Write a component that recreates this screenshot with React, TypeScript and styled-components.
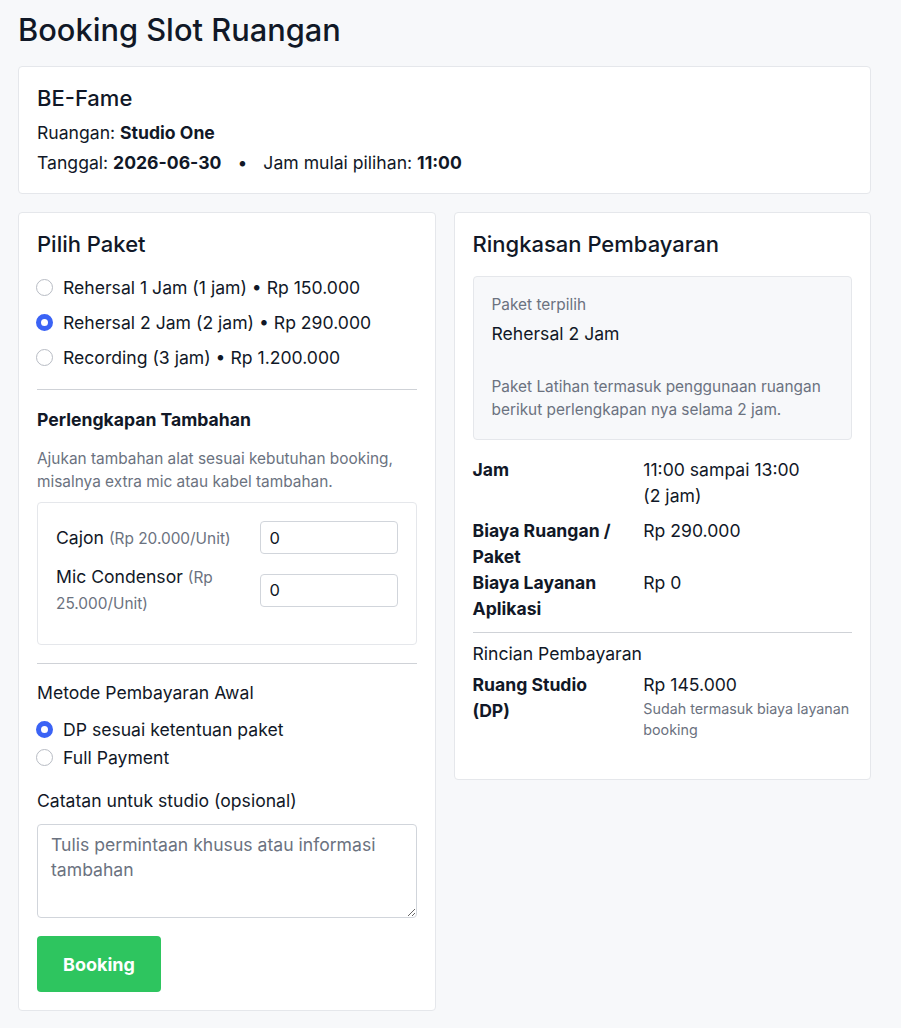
import React, { useState } from 'react';
import styled, { createGlobalStyle } from 'styled-components';

const GlobalStyle = createGlobalStyle`
  * { box-sizing: border-box; }
  body {
    margin: 0;
    background: #f7f8fa;
    font-family: Inter, "Noto Sans", sans-serif;
    color: #111827;
  }
`;

type Paket = { id: string; name: string; hours: number; price: number; desc: string };

const PAKETS: Paket[] = [
  { id: 'r1', name: 'Rehersal 1 Jam', hours: 1, price: 150000, desc: 'Paket Latihan termasuk penggunaan ruangan berikut perlengkapan nya selama 1 jam.' },
  { id: 'r2', name: 'Rehersal 2 Jam', hours: 2, price: 290000, desc: 'Paket Latihan termasuk penggunaan ruangan berikut perlengkapan nya selama 2 jam.' },
  { id: 'rec', name: 'Recording', hours: 3, price: 1200000, desc: 'Paket Recording termasuk penggunaan ruangan berikut perlengkapan nya selama 3 jam.' },
];

const EQUIPMENT = [
  { id: 'cajon', name: 'Cajon', price: 20000 },
  { id: 'mic', name: 'Mic Condensor', price: 25000 },
];

const rp = (n: number) => 'Rp ' + n.toLocaleString('id-ID');

const App: React.FC = () => {
  const [paketId, setPaketId] = useState('r2');
  const [method, setMethod] = useState<'dp' | 'full'>('dp');
  const [qty, setQty] = useState<Record<string, string>>({ cajon: '0', mic: '0' });
  const [note, setNote] = useState('');

  const paket = PAKETS.find((p) => p.id === paketId)!;
  const startHour = 11;
  const endHour = startHour + paket.hours;
  const pad = (h: number) => `${String(h).padStart(2, '0')}:00`;

  return (
    <Page>
      <GlobalStyle />
      <Title>Booking Slot Ruangan</Title>

      <Card>
        <CardTitle $mb={10}>BE-Fame</CardTitle>
        <InfoLine>
          Ruangan: <b>Studio One</b>
        </InfoLine>
        <InfoLine>
          Tanggal: <b>2026-06-30</b>
          <Dot>•</Dot>
          Jam mulai pilihan: <b>11:00</b>
        </InfoLine>
      </Card>

      <Columns>
        <Card>
          <CardTitle $mb={13}>Pilih Paket</CardTitle>
          {PAKETS.map((p) => (
            <RadioRow key={p.id} $h={35}>
              <Radio
                type="radio"
                name="paket"
                checked={paketId === p.id}
                onChange={() => setPaketId(p.id)}
              />
              {p.name} ({p.hours} jam) • {rp(p.price)}
            </RadioRow>
          ))}

          <Divider $mt={14} />

          <SubHeading>Perlengkapan Tambahan</SubHeading>
          <Muted>
            Ajukan tambahan alat sesuai kebutuhan booking, misalnya extra mic atau kabel
            tambahan.
          </Muted>
          <EquipBox>
            {EQUIPMENT.map((e) => (
              <EquipRow key={e.id}>
                <EquipLabel>
                  {e.name} <small>({rp(e.price)}/Unit)</small>
                </EquipLabel>
                <QtyInput
                  type="number"
                  min={0}
                  value={qty[e.id]}
                  onChange={(ev) => setQty({ ...qty, [e.id]: ev.target.value })}
                />
              </EquipRow>
            ))}
          </EquipBox>

          <Divider $mt={18} $mb={17} />

          <FieldLabel>Metode Pembayaran Awal</FieldLabel>
          <RadioRow $h={28}>
            <Radio type="radio" name="method" checked={method === 'dp'} onChange={() => setMethod('dp')} />
            DP sesuai ketentuan paket
          </RadioRow>
          <RadioRow $h={28}>
            <Radio type="radio" name="method" checked={method === 'full'} onChange={() => setMethod('full')} />
            Full Payment
          </RadioRow>

          <FieldLabel $mt={18} $mb={11}>Catatan untuk studio (opsional)</FieldLabel>
          <NoteArea
            placeholder="Tulis permintaan khusus atau informasi tambahan"
            value={note}
            onChange={(e) => setNote(e.target.value)}
          />

          <BookingButton type="button">Booking</BookingButton>
        </Card>

        <Card $self="start">
          <CardTitle $mb={19}>Ringkasan Pembayaran</CardTitle>
          <PaketBox>
            <SmallMuted>Paket terpilih</SmallMuted>
            <PaketName>{paket.name}</PaketName>
            <Muted $mb={0}>{paket.desc}</Muted>
          </PaketBox>

          <SummaryRow $mb={9}>
            <dt>Jam</dt>
            <dd>
              {pad(startHour)} sampai {pad(endHour)} <Keep>({paket.hours} jam)</Keep>
            </dd>
          </SummaryRow>
          <SummaryRow>
            <dt>Biaya Ruangan / Paket</dt>
            <dd>{rp(paket.price)}</dd>
          </SummaryRow>
          <SummaryRow>
            <dt>Biaya Layanan Aplikasi</dt>
            <dd>Rp 0</dd>
          </SummaryRow>

          <Divider $mt={10} $mb={9} />

          <FieldLabel $mb={6}>Rincian Pembayaran</FieldLabel>
          <SummaryRow $mb={21}>
            <dt>Ruang Studio ({method === 'dp' ? 'DP' : 'Full'})</dt>
            <dd>
              {rp(method === 'dp' ? paket.price / 2 : paket.price)}
              <Note>Sudah termasuk biaya layanan booking</Note>
            </dd>
          </SummaryRow>
        </Card>
      </Columns>
    </Page>
  );
};

const Page = styled.div`
  padding: 12px 30px 18px 18px;
`;

const Title = styled.h1`
  margin: 0 0 18px;
  font-size: 30.8px;
  line-height: 36px;
  font-weight: 500;
`;

const Card = styled.section<{ $self?: string }>`
  background: #fff;
  border: 1px solid #e5e7eb;
  border-radius: 4px;
  padding: 18px;
  align-self: ${(p) => p.$self || 'stretch'};
`;

const Columns = styled.div`
  display: grid;
  grid-template-columns: 1fr 1fr;
  gap: 18px;
  margin-top: 18px;
`;

const CardTitle = styled.h2<{ $mb?: number }>`
  margin: 0 0 ${(p) => p.$mb ?? 12}px;
  font-size: 22px;
  line-height: 26px;
  font-weight: 500;
`;

const InfoLine = styled.p`
  margin: 0 0 6px;
  font-size: 17.6px;
  line-height: 24px;
  &:last-child { margin-bottom: 0; }
  b { font-weight: 700; }
`;

const Dot = styled.span`
  margin: 0 16px;
`;

const RadioRow = styled.label<{ $h: number }>`
  display: flex;
  align-items: center;
  gap: 10px;
  height: ${(p) => p.$h}px;
  font-size: 17.6px;
  cursor: pointer;
`;

const Radio = styled.input`
  appearance: none;
  margin: 0 0 0 -1px;
  width: 17px;
  height: 17px;
  border-radius: 50%;
  border: 1px solid #b8bcc4;
  background: #fff;
  flex-shrink: 0;
  &:checked {
    border: 5px solid #3b63f5;
  }
`;

const Divider = styled.hr<{ $mt?: number; $mb?: number }>`
  border: 0;
  border-top: 1px solid #cfd2d7;
  margin: ${(p) => p.$mt ?? 18}px 0 ${(p) => p.$mb ?? 18}px;
`;

const SubHeading = styled.h3`
  margin: 0 0 15px;
  font-size: 17.6px;
  line-height: 24px;
  font-weight: 700;
`;

const Muted = styled.p<{ $mb?: number }>`
  margin: 0 0 ${(p) => p.$mb ?? 9}px;
  font-size: 15.4px;
  line-height: 23px;
  color: #6b7280;
`;

const EquipBox = styled.div`
  border: 1px solid #e5e7eb;
  border-radius: 4px;
  padding: 18px;
`;

const EquipRow = styled.div`
  display: grid;
  grid-template-columns: 1fr 138px;
  gap: 14px;
  align-items: center;
  margin-bottom: 10px;
`;

const EquipLabel = styled.span`
  font-size: 17.6px;
  line-height: 25px;
  small {
    font-size: 15.4px;
    color: #6b7280;
  }
`;

const QtyInput = styled.input`
  height: 33px;
  width: 100%;
  border: 1px solid #d1d5db;
  border-radius: 4px;
  padding: 0 9px;
  font: inherit;
  font-size: 16.5px;
  color: #111827;
  -moz-appearance: textfield;
  &::-webkit-inner-spin-button,
  &::-webkit-outer-spin-button { -webkit-appearance: none; margin: 0; }
`;

const FieldLabel = styled.div<{ $mt?: number; $mb?: number }>`
  margin: ${(p) => p.$mt ?? 0}px 0 ${(p) => p.$mb ?? 10}px;
  font-size: 17.6px;
  line-height: 24px;
`;

const NoteArea = styled.textarea`
  display: block;
  width: 100%;
  height: 94px;
  border: 1px solid #d1d5db;
  border-radius: 4px;
  padding: 7px 13px;
  font-family: Inter, "Noto Sans", sans-serif;
  font-size: 17.6px;
  line-height: 25px;
  color: #111827;
  resize: vertical;
  &::placeholder { color: #6b7280; }
`;

const BookingButton = styled.button`
  margin-top: 18px;
  height: 56px;
  padding: 0 26px;
  border: 0;
  border-radius: 4px;
  background: #2ec55f;
  color: #fff;
  font-family: Inter, "Noto Sans", sans-serif;
  font-size: 18px;
  font-weight: 700;
  cursor: pointer;
`;

const PaketBox = styled.div`
  background: #f7f8fa;
  border: 1px solid #e5e7eb;
  border-radius: 4px;
  padding: 18px;
  margin-bottom: 17px;
`;

const SmallMuted = styled.div`
  font-size: 15.4px;
  line-height: 20px;
  color: #6b7280;
  margin-bottom: 7px;
`;

const PaketName = styled.div`
  font-size: 17.6px;
  line-height: 24px;
  margin-bottom: 29px;
`;

const SummaryRow = styled.dl<{ $mb?: number }>`
  display: grid;
  grid-template-columns: 45% 55%;
  margin: 0 0 ${(p) => p.$mb ?? 0}px;
  font-size: 17.6px;
  line-height: 26px;
  dt { font-weight: 700; padding-right: 20px; }
  dd { margin: 0; }
`;

const Keep = styled.span`
  white-space: nowrap;
`;

const Note = styled.div`
  font-size: 14.3px;
  line-height: 21px;
  color: #6b7280;
`;

export default App;
